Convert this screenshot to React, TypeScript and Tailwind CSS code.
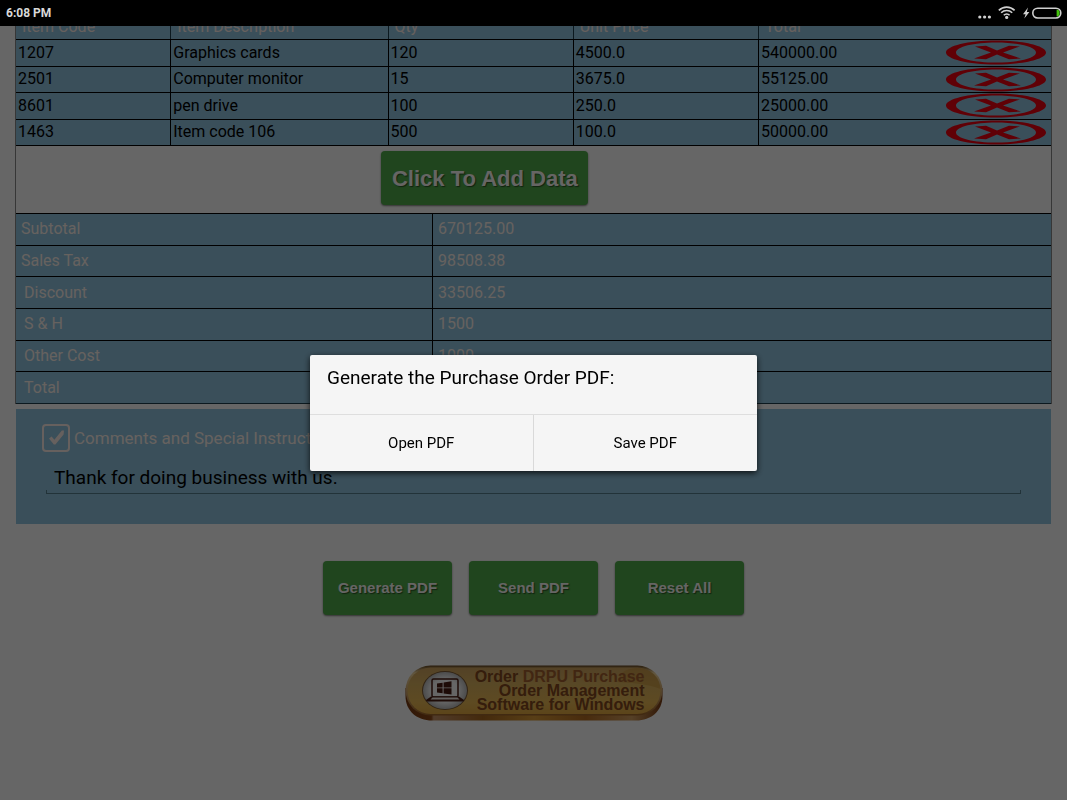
import React from "react";

type Item = { code: string; description: string; qty: string; price: string; total: string };

const items: Item[] = [
  { code: "1207", description: "Graphics cards", qty: "120", price: "4500.0", total: "540000.00" },
  { code: "2501", description: "Computer monitor", qty: "15", price: "3675.0", total: "55125.00" },
  { code: "8601", description: "pen drive", qty: "100", price: "250.0", total: "25000.00" },
  { code: "1463", description: "Item code 106", qty: "500", price: "100.0", total: "50000.00" },
];

const summary = [
  { label: "Subtotal", value: "670125.00", indent: false },
  { label: "Sales Tax", value: "98508.38", indent: false },
  { label: "Discount", value: "33506.25", indent: true },
  { label: "S & H", value: "1500", indent: true },
  { label: "Other Cost", value: "1000", indent: true },
  { label: "Total", value: "", indent: true },
];

function StatusBar() {
  return (
    <header className="sticky top-0 z-20 flex h-[26px] items-center justify-between bg-black pl-1.5 pr-1">
      <span className="text-xs font-bold text-[#d8d8d8]">6:08 PM</span>
      <svg width="86" height="20" viewBox="0 0 86 20" aria-hidden="true">
        <g fill="#d0d0d0">
          <circle cx="2.8" cy="14" r="1.6" />
          <circle cx="7.6" cy="14" r="1.6" />
          <circle cx="12.4" cy="14" r="1.6" />
          <circle cx="29.7" cy="14.4" r="1.6" />
          <path d="M51 4.5 L46 11.2 H48.6 L47.3 15.6 L52.4 9 H49.8 Z" />
        </g>
        <g fill="none" stroke="#d0d0d0" strokeWidth="1.6">
          <path d="M21.8 7.4 C26.2 3 33.2 3 37.6 7.4" />
          <path d="M24.2 9.8 C27.2 6.8 32.2 6.8 35.2 9.8" />
          <path d="M26.8 12.2 C28.4 10.5 31 10.5 32.6 12.2" />
          <rect x="55.8" y="5.2" width="28" height="9.8" rx="4.9" />
        </g>
        <path d="M79.6 6.8 H81 C83.2 7.8 83.2 12.4 81 13.4 H79.6 Z" fill="#43c40c" />
      </svg>
    </header>
  );
}

function RemoveIcon() {
  return (
    <svg viewBox="0 0 102 25" preserveAspectRatio="none" className="block h-[25px] w-full" aria-hidden="true">
      <path
        fillRule="evenodd"
        fill="#f0000f"
        d="M51 .5 C79 .5 101 6 101 12.5 S79 24.5 51 24.5 S1 19 1 12.5 S23 .5 51 .5 Z M51 2.4 C29 2.4 11 6.6 11 12.5 S29 22.6 51 22.6 S91 18.4 91 12.5 S73 2.4 51 2.4 Z"
      />
      <path
        fill="#f0000f"
        d="M30 6.4 L41 5.8 L52 10.6 L64 5.8 L75 6.4 L58 12.4 L76 18.6 L64 19.2 L52 14.4 L41 19.2 L29 18.6 L46 12.4 Z"
      />
    </svg>
  );
}

const headCell = "border-r border-[#20404f] pl-1.5 text-left font-normal text-[#fff0ea] last:border-r-0";
const cell = "border-t border-r border-black p-0 pl-0.5 last:border-r-0";

function ItemsTable() {
  return (
    <table className="h-[132px] w-full table-fixed border-separate border-spacing-0 border-b border-black bg-[#91c5e0] text-base leading-5">
      <colgroup>
        <col className="w-[15%]" />
        <col className="w-[21%]" />
        <col className="w-[17.9%]" />
        <col className="w-[17.9%]" />
        <col />
      </colgroup>
      <thead>
        <tr className="h-[25px]">
          <th className={headCell}>Item Code</th>
          <th className={headCell}>Item Description</th>
          <th className={headCell}>Qty</th>
          <th className={headCell}>Unit Price</th>
          <th className={headCell}>Total</th>
        </tr>
      </thead>
      <tbody>
        {items.map((item) => (
          <tr key={item.code}>
            <td className={cell}>{item.code}</td>
            <td className={cell}>{item.description}</td>
            <td className={cell}>{item.qty}</td>
            <td className={cell}>{item.price}</td>
            <td className={cell}>
              <div className="flex items-center justify-between pr-1">
                {item.total}
                <button type="button" aria-label={"Remove " + item.description} className="w-[102px]">
                  <RemoveIcon />
                </button>
              </div>
            </td>
          </tr>
        ))}
      </tbody>
    </table>
  );
}

function SummaryTable() {
  return (
    <table className="h-[191px] w-full table-fixed border-separate border-spacing-0 border-b border-[#20404f] bg-[#91c5e0] text-base leading-5">
      <colgroup>
        <col className="w-[40.3%]" />
        <col />
      </colgroup>
      <tbody>
        {summary.map((row) => (
          <tr key={row.label}>
            <th
              scope="row"
              className={
                "border-t border-r border-black p-0 text-left font-normal text-[#fff4ee] " +
                (row.indent ? "pl-2" : "pl-[5px]")
              }
            >
              {row.label}
            </th>
            <td className="border-t border-black p-0 pl-[5px] text-[#fff4ee]">{row.value}</td>
          </tr>
        ))}
      </tbody>
    </table>
  );
}

function Comments() {
  return (
    <section className="mt-[5px] h-[115px] bg-[#91c5e0] px-[26px] pt-[15px]">
      <label className="flex items-center gap-1 text-[17px] leading-7 text-[#fff4ee]">
        <span className="grid">
          <input
            type="checkbox"
            defaultChecked
            className="col-start-1 row-start-1 size-7 appearance-none rounded border-2 border-[#fff0ea]"
          />
          <svg viewBox="0 0 28 28" className="pointer-events-none col-start-1 row-start-1 size-7" aria-hidden="true">
            <path d="M7 14.6 L9.6 12.6 L12.4 15.8 L19.8 6.6 L22 6.4 L21.6 10.6 L13.4 20.6 L11.8 20.6 Z" fill="#fff0ea" />
          </svg>
        </span>
        Comments and Special Instructions
      </label>
      <div className="mx-1 mt-2.5">
        <input
          type="text"
          aria-label="Comments"
          defaultValue="Thank for doing business with us."
          className="block h-8 w-full bg-transparent px-2 text-[19px] leading-8 text-black outline-none"
        />
        <div className="-mt-1 h-1 border-x border-b border-[#56808f]" />
      </div>
    </section>
  );
}

const greenButton =
  "rounded bg-[#50ac4b] font-bold text-[#fffdfa] shadow-[0_1px_2px_rgba(0,0,0,0.5)] [text-shadow:1px_1px_1px_rgba(0,0,0,0.5)]";
const actionButton =
  greenButton + " h-[54px] w-[129px] font-['Liberation_Sans',sans-serif] text-[15px] whitespace-nowrap";

function OrderBanner() {
  return (
    <a
      href="#order"
      className="relative flex h-14 w-[258px] items-start justify-end pt-[5px] pr-[18px] text-right font-['Liberation_Sans',sans-serif] text-base leading-[14px] font-bold text-[#84491f]"
    >
      <svg viewBox="0 0 258 56" className="absolute inset-0 size-full" aria-hidden="true">
        <defs>
          <linearGradient id="rim" x1="0" x2="1">
            <stop offset="0" stopColor="#7a3b12" />
            <stop offset=".1" stopColor="#8f4a18" />
            <stop offset=".11" stopColor="#c9946a" />
            <stop offset=".3" stopColor="#a9681f" />
            <stop offset=".5" stopColor="#dc9c38" />
            <stop offset=".7" stopColor="#b46c22" />
            <stop offset=".88" stopColor="#d5a060" />
            <stop offset="1" stopColor="#7a3b12" />
          </linearGradient>
          <linearGradient id="gold" x1="0" y1="0" x2="0" y2="1">
            <stop offset="0" stopColor="#cfa45f" />
            <stop offset=".35" stopColor="#dcb35f" />
            <stop offset=".75" stopColor="#eab955" />
            <stop offset="1" stopColor="#e5ab42" />
          </linearGradient>
          <linearGradient id="edge" x1="0" y1="0" x2="0" y2="1">
            <stop offset="0" stopColor="#6b4a20" />
            <stop offset=".15" stopColor="#f4d9a0" />
            <stop offset="1" stopColor="#a2672a" />
          </linearGradient>
          <radialGradient id="disc">
            <stop offset=".6" stopColor="#ffffff" />
            <stop offset="1" stopColor="#bdbdbd" />
          </radialGradient>
        </defs>
        <path d="M.5 23 H257.5 V31 C257.5 46 246 55.5 231 55.5 H27 C12 55.5 .5 46 .5 31 Z" fill="url(#rim)" />
        <rect x=".5" y=".5" width="257" height="50" rx="25" fill="url(#edge)" />
        <rect x="2.5" y="2.5" width="253" height="46.5" rx="23.2" fill="url(#gold)" />
        <path d="M216 9 C222 3 232 2.5 238 3.5 C249 6 255 14 255.5 24 C240 18 225 18 212 17 Z" fill="#c48b2d" opacity=".4" />
        <ellipse cx="40" cy="25.5" rx="23" ry="19.5" fill="#7b5a36" />
        <ellipse cx="40" cy="25.5" rx="22" ry="18.6" fill="url(#disc)" />
        <rect x="27" y="14" width="26" height="18" rx="1.5" fill="none" stroke="#4a1c12" strokeWidth="1.5" />
        <path d="M26 31.5 H54 L59 35 C59 36.3 58 36.6 57 36.6 H23 C22 36.6 21 36.3 21 35 Z" fill="#4a1c12" />
        <path d="M27.5 32.6 H52.5 L54.5 34.4 H25.5 Z" fill="#f5eee8" />
        <path
          d="M32 18.5 L37.6 17.7 V22.4 H32 Z M38.6 17.5 L46.5 16.3 V22.4 H38.6 Z M32 23.3 H37.6 V28.2 L32 27.4 Z M38.6 23.3 H46.5 V29.6 L38.6 28.4 Z"
          fill="#4a1c12"
        />
      </svg>
      <span className="relative whitespace-nowrap">
        Order <span className="text-[#a4602f]">DRPU Purchase</span>
        <br />
        Order Management
        <br />
        Software for Windows
      </span>
    </a>
  );
}

function PdfDialog() {
  return (
    <div className="fixed inset-x-0 top-[26px] bottom-0 z-10 flex items-center justify-center bg-black/60">
      <div
        role="dialog"
        aria-modal="true"
        aria-labelledby="pdf-title"
        className="w-[447px] max-w-full rounded-xs bg-[#f5f5f5] text-black shadow-[0_2px_6px_rgba(0,0,0,0.8)]"
      >
        <h2 id="pdf-title" className="h-[59px] px-[17px] pt-[11px] text-[19px] leading-6">
          Generate the Purchase Order PDF:
        </h2>
        <div className="grid h-[57px] grid-cols-2 divide-x divide-[#d9d9d9] border-t border-[#dedede] text-[15px]">
          <button type="button">Open PDF</button>
          <button type="button">Save PDF</button>
        </div>
      </div>
    </div>
  );
}

export default function App() {
  return (
    <div className="min-h-screen bg-white font-[Roboto,sans-serif] text-black">
      <StatusBar />
      <main className="-mt-3 px-4 pb-4">
        <div className="-mx-px border-x border-[#8a8a8a]">
          <ItemsTable />
          <div className="h-[67px] pt-[5px]">
            <button
              type="button"
              className={greenButton + " ml-[35.3%] h-[54px] w-[207px] font-['Liberation_Sans',sans-serif] text-[22px] whitespace-nowrap"}
            >
              Click To Add Data
            </button>
          </div>
          <SummaryTable />
        </div>
        <Comments />
        <div className="mt-[37px] flex justify-center gap-[17px]">
          <button type="button" className={actionButton}>Generate PDF</button>
          <button type="button" className={actionButton}>Send PDF</button>
          <button type="button" className={actionButton}>Reset All</button>
        </div>
        <div className="mt-[50px] flex justify-center">
          <OrderBanner />
        </div>
      </main>
      <PdfDialog />
    </div>
  );
}
